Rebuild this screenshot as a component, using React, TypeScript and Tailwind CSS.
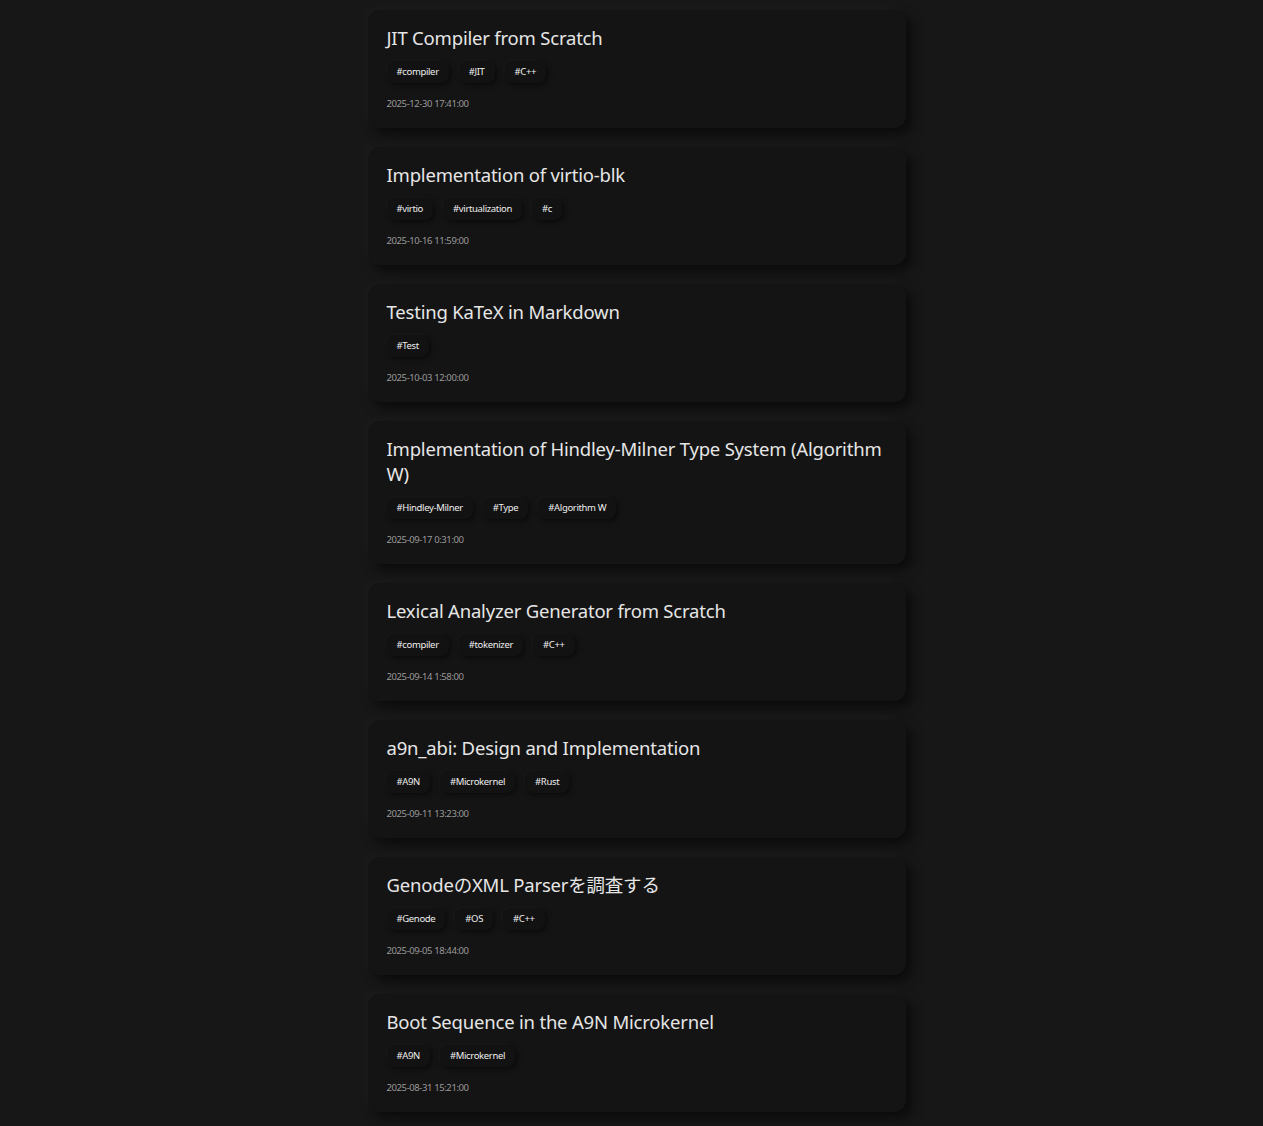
import React from "react";

type Post = { title: string; tags: string[]; date: string };

const posts: Post[] = [
  { title: "JIT Compiler from Scratch", tags: ["#compiler", "#JIT", "#C++"], date: "2025-12-30 17:41:00" },
  { title: "Implementation of virtio-blk", tags: ["#virtio", "#virtualization", "#c"], date: "2025-10-16 11:59:00" },
  { title: "Testing KaTeX in Markdown", tags: ["#Test"], date: "2025-10-03 12:00:00" },
  {
    title: "Implementation of Hindley-Milner Type System (Algorithm W)",
    tags: ["#Hindley-Milner", "#Type", "#Algorithm W"],
    date: "2025-09-17 0:31:00",
  },
  { title: "Lexical Analyzer Generator from Scratch", tags: ["#compiler", "#tokenizer", "#C++"], date: "2025-09-14 1:58:00" },
  { title: "a9n_abi: Design and Implementation", tags: ["#A9N", "#Microkernel", "#Rust"], date: "2025-09-11 13:23:00" },
  { title: "GenodeのXML Parserを調査する", tags: ["#Genode", "#OS", "#C++"], date: "2025-09-05 18:44:00" },
  { title: "Boot Sequence in the A9N Microkernel", tags: ["#A9N", "#Microkernel"], date: "2025-08-31 15:21:00" },
];

export default function App() {
  return (
    <div
      className="min-h-[1126px] w-full bg-[#171717] pt-[10px]"
      style={{ fontFamily: '"Noto Sans", "Noto Sans CJK JP", sans-serif' }}
    >
      <div className="mx-auto w-[548px] pl-[10px]">
        <div className="flex w-[538px] flex-col gap-[19px]">
          {posts.map((p) => (
            <div
              key={p.title}
              className="rounded-xl bg-[#141414] pb-[17px] pl-[19px] pr-[14px] pt-[15px] shadow-[-5px_-5px_12px_rgba(255,255,255,0.025),6px_6px_12px_rgba(0,0,0,0.55)]"
            >
              <h2 className="text-[18.5px] leading-[25px] tracking-[-0.2px] text-[#e6e6e6]">{p.title}</h2>
              <div className="mt-[11px] flex flex-wrap gap-[10px]">
                {p.tags.map((t) => (
                  <span
                    key={t}
                    className="rounded-lg bg-[#121212] px-[10px] py-[4px] text-[9.5px] leading-[14px] tracking-[-0.35px] text-[#eeeeee] shadow-[-2px_-2px_5px_rgba(255,255,255,0.025),2px_2px_5px_rgba(0,0,0,0.5)]"
                  >
                    {t}
                  </span>
                ))}
              </div>
              <div className="mt-[13px] text-[9.5px] leading-[15px] tracking-[-0.4px] text-[#9a9a9a]">{p.date}</div>
            </div>
          ))}
        </div>
      </div>
    </div>
  );
}
